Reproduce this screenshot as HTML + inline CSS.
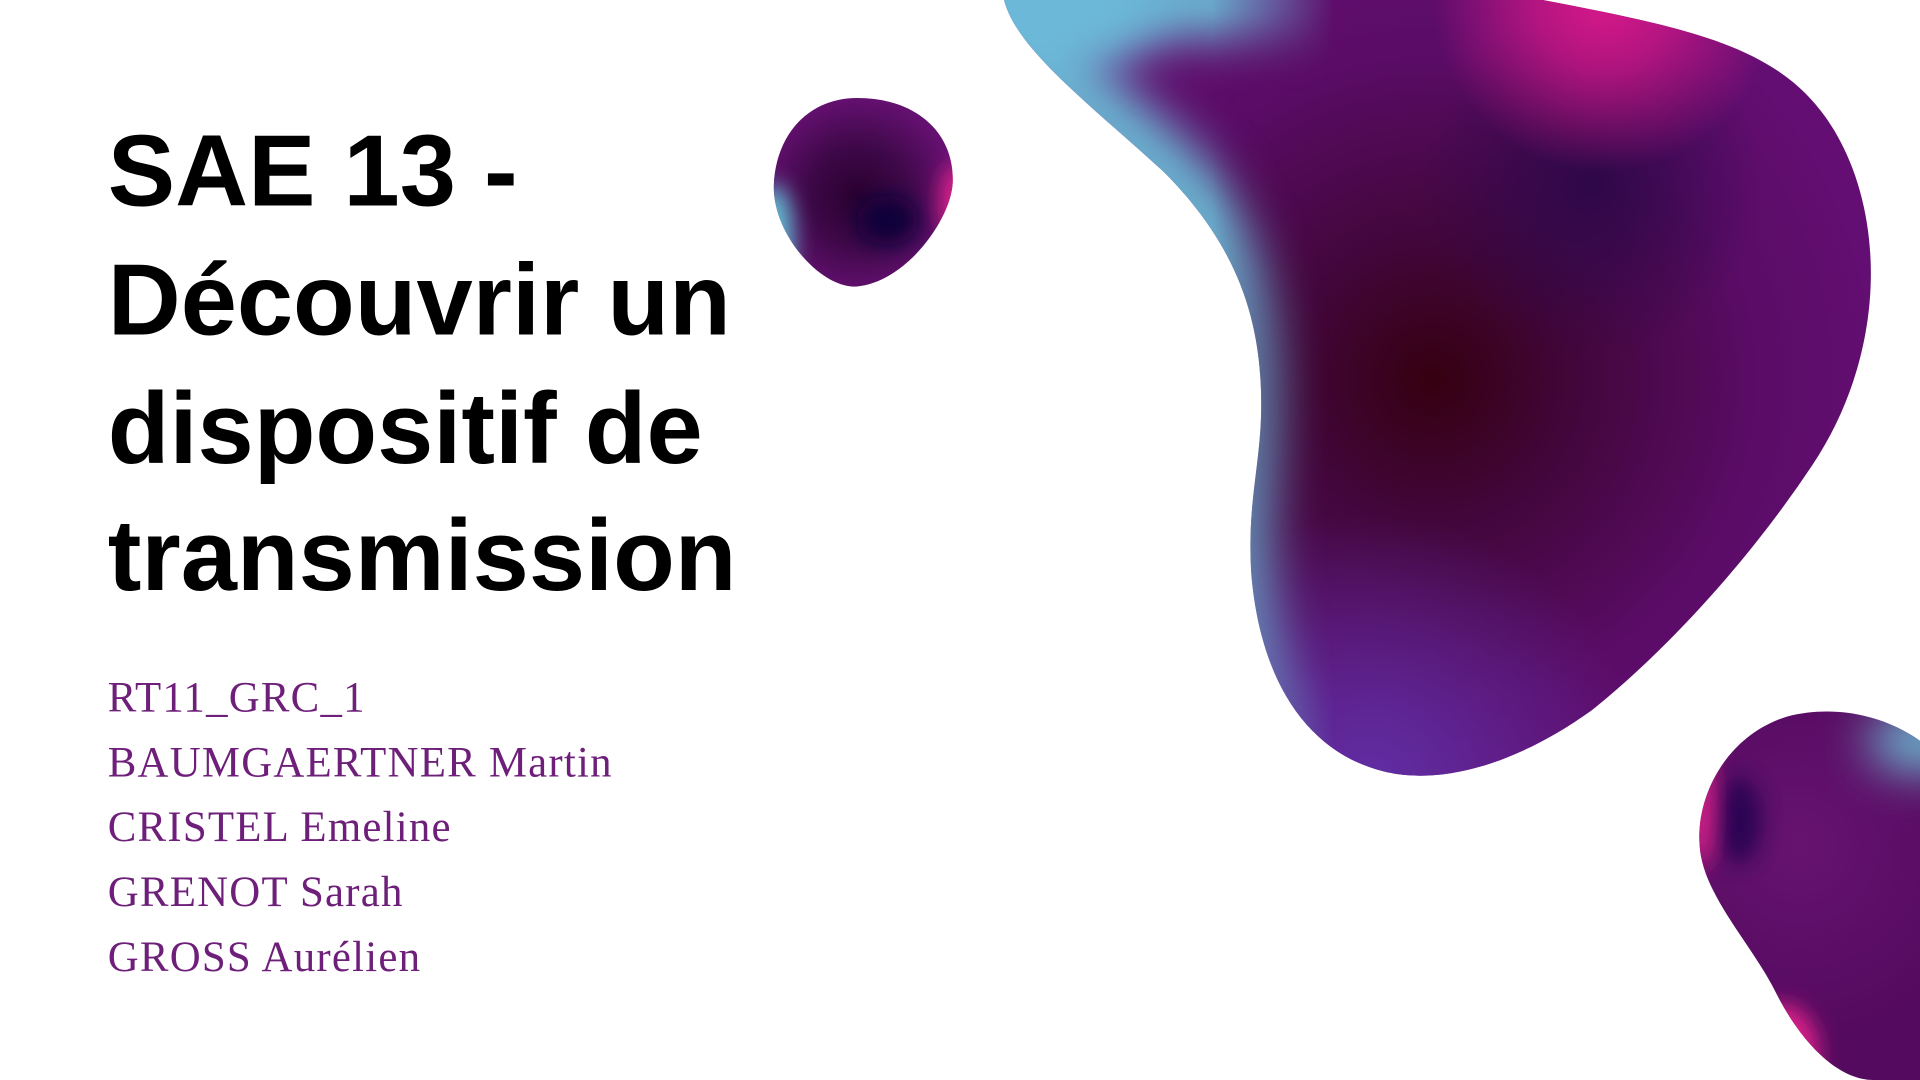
<!DOCTYPE html>
<html><head><meta charset="utf-8"><style>
html,body{margin:0;padding:0;background:#fff;overflow:hidden}
svg{display:block}
</style></head><body>
<svg width="1920" height="1080" viewBox="0 0 1568 882" xmlns="http://www.w3.org/2000/svg">
<defs>
<path id="big" d="M820 0 L1260 0 C1390 25 1460 40 1500 110 C1540 180 1540 290 1480 380 C1420 470 1350 540 1300 580 C1230 630 1170 640 1130 630 C1070 615 1030 560 1022 470 C1018 410 1030 380 1030 330 C1030 260 1010 200 950 140 C890 85 830 40 820 0 Z"/>
<path id="sm1" d="M700 80 C750 80 780 110 778 150 C776 180 740 230 700 234 C670 236 630 190 632 150 C634 110 660 80 700 80 Z"/>
<path id="sm2" d="M1568 605 C1540 585 1500 575 1460 585 C1410 600 1385 650 1388 690 C1390 730 1430 770 1450 810 C1470 850 1500 882 1530 882 L1568 882 Z"/>
<clipPath id="cb"><use href="#big"/></clipPath>
<clipPath id="c1"><use href="#sm1"/></clipPath>
<clipPath id="c2"><use href="#sm2"/></clipPath>
<filter id="bl20" filterUnits="userSpaceOnUse" x="-300" y="-300" width="2200" height="1500"><feGaussianBlur stdDeviation="20"/></filter>
<filter id="bl8" filterUnits="userSpaceOnUse" x="-300" y="-300" width="2200" height="1500"><feGaussianBlur stdDeviation="9"/></filter>
<radialGradient id="g1" cx="1170" cy="310" r="380" gradientUnits="userSpaceOnUse">
<stop offset="0" stop-color="#360010"/>
<stop offset="0.3" stop-color="#42063a"/>
<stop offset="0.7" stop-color="#5a0c66"/>
<stop offset="1" stop-color="#640e74"/>
</radialGradient>
<radialGradient id="ind" cx="1300" cy="150" r="140" gradientUnits="userSpaceOnUse">
<stop offset="0" stop-color="#2a0848" stop-opacity="0.9"/>
<stop offset="1" stop-color="#2a0848" stop-opacity="0"/>
</radialGradient>
<radialGradient id="pk" cx="1310" cy="0" r="140" gradientUnits="userSpaceOnUse">
<stop offset="0" stop-color="#d8188a"/>
<stop offset="0.4" stop-color="#d8188a" stop-opacity="0.7"/>
<stop offset="1" stop-color="#d8188a" stop-opacity="0"/>
</radialGradient>
<radialGradient id="blu" cx="1120" cy="640" r="220" gradientUnits="userSpaceOnUse">
<stop offset="0" stop-color="#6030a8" stop-opacity="0.95"/>
<stop offset="1" stop-color="#6030a8" stop-opacity="0"/>
</radialGradient>
<linearGradient id="mk" x1="990" y1="0" x2="1090" y2="0" gradientUnits="userSpaceOnUse">
<stop offset="0" stop-color="#fff"/><stop offset="1" stop-color="#000"/>
</linearGradient>
<mask id="m1" maskUnits="userSpaceOnUse" x="0" y="0" width="1568" height="882"><rect width="1568" height="882" fill="url(#mk)"/></mask>
<radialGradient id="s1" cx="700" cy="160" r="80" gradientUnits="userSpaceOnUse">
<stop offset="0" stop-color="#2a0030"/>
<stop offset="0.5" stop-color="#3e0848"/>
<stop offset="1" stop-color="#641070"/>
</radialGradient>
<radialGradient id="s2" cx="1470" cy="690" r="160" gradientUnits="userSpaceOnUse">
<stop offset="0" stop-color="#661370"/>
<stop offset="1" stop-color="#540a5e"/>
</radialGradient>
</defs>

<use href="#big" fill="url(#g1)"/>
<g clip-path="url(#cb)">
  <rect x="800" y="0" width="768" height="882" fill="url(#ind)"/>
  <rect x="800" y="0" width="768" height="882" fill="url(#pk)"/>
  <rect x="800" y="0" width="768" height="882" fill="url(#blu)"/>
  <g mask="url(#m1)">
    <use href="#big" fill="none" stroke="#6abcd6" stroke-width="60" filter="url(#bl20)"/>
    <ellipse cx="850" cy="0" rx="100" ry="60" fill="#6cb8d8" filter="url(#bl20)"/>
  </g>
</g>

<use href="#sm1" fill="url(#s1)"/>
<g clip-path="url(#c1)">
  <ellipse cx="725" cy="180" rx="25" ry="20" fill="#10003a" filter="url(#bl8)"/>
  <ellipse cx="632" cy="195" rx="16" ry="45" fill="#60c0d4" filter="url(#bl8)"/>
  <ellipse cx="782" cy="165" rx="14" ry="32" fill="#e0208a" filter="url(#bl8)"/>
</g>

<use href="#sm2" fill="url(#s2)"/>
<g clip-path="url(#c2)">
  <ellipse cx="1420" cy="670" rx="18" ry="35" fill="#1a0050" filter="url(#bl8)" opacity="0.8"/>
  <ellipse cx="1390" cy="660" rx="10" ry="50" fill="#e0208a" filter="url(#bl8)"/>
  <ellipse cx="1455" cy="860" rx="30" ry="40" fill="#e0208a" filter="url(#bl8)"/>
  <ellipse cx="1570" cy="605" rx="45" ry="25" fill="#6cc0d4" filter="url(#bl20)"/>
</g>

<g font-family="'Liberation Sans', sans-serif" font-size="82.5" font-weight="bold" fill="#000">
<text x="88" y="168">SAE 13 -</text>
<text x="88" y="273">Découvrir un</text>
<text x="88" y="378">dispositif de</text>
<text x="88" y="482">transmission</text>
</g>
<g font-family="'Liberation Serif', serif" font-size="35" letter-spacing="1" fill="#6e1f7a">
<text x="88" y="581">RT11_GRC_1</text>
<text x="88" y="634">BAUMGAERTNER Martin</text>
<text x="88" y="687">CRISTEL Emeline</text>
<text x="88" y="740">GRENOT Sarah</text>
<text x="88" y="793">GROSS Aurélien</text>
</g>
</svg>
</body></html>
